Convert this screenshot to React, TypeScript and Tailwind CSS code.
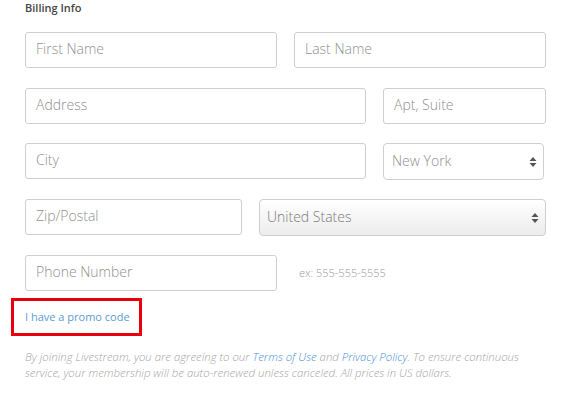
import React from "react";

const Arrows = () => (
  <svg width="8" height="12" viewBox="0 0 8 12" className="absolute right-[6px] top-1/2 -translate-y-1/2">
    <path d="M4 1 L7.5 5 L0.5 5 Z" fill="#555" />
    <path d="M4 11 L7.5 7 L0.5 7 Z" fill="#555" />
  </svg>
);

const Input = ({ label, w }: { label: string; w: string }) => (
  <div className={`${w} h-[36px] border border-[#cfcfcf] rounded-[3px] flex items-center pl-[10px] pb-[3px] text-[14px] font-light text-[#8f8f8f] bg-white`}>
    {label}
  </div>
);

export default function App() {
  return (
    <div
      className="w-[570px] h-[396px] bg-white overflow-hidden pl-[25px] relative"
      style={{ fontFamily: "'Open Sans', Lato, sans-serif" }}
    >
      <div className="text-[11px] font-semibold text-[#444] leading-[16px]">Billing Info</div>
      <div className="flex gap-[17px] mt-[16px]">
        <Input label="First Name" w="w-[252px]" />
        <Input label="Last Name" w="w-[252px]" />
      </div>
      <div className="flex gap-[17px] mt-[20px]">
        <Input label="Address" w="w-[341px]" />
        <Input label="Apt, Suite" w="w-[163px]" />
      </div>
      <div className="flex gap-[17px] mt-[19px]">
        <Input label="City" w="w-[341px]" />
        <div className="relative w-[161px] h-[37px] border border-[#cfcfcf] rounded-[4px] flex items-center pl-[8px] pb-[3px] text-[14px] font-light text-[#8f8f8f] bg-white">
          New York
          <Arrows />
        </div>
      </div>
      <div className="flex gap-[17px] mt-[19px]">
        <Input label="Zip/Postal" w="w-[217px]" />
        <div className="relative w-[287px] h-[37px] border border-[#cfcfcf] rounded-[4px] flex items-center pl-[7px] pb-[3px] text-[14px] font-light text-[#7a7a7a] bg-gradient-to-b from-white to-[#ececec]">
          United States
          <Arrows />
        </div>
      </div>
      <div className="flex items-center gap-[22px] mt-[19px]">
        <Input label="Phone Number" w="w-[252px]" />
        <div className="text-[11px] font-light text-[#999]">ex: 555-555-5555</div>
      </div>
      <div className="-ml-[14px] mt-[7px] w-[131px] h-[38px] border-[3px] border-[#e8000b] flex items-center pl-[11px]">
        <span className="text-[11px] text-[#5b9bd5]">I have a promo code</span>
      </div>
      <p className="mt-[13px] text-[11.4px] italic font-light text-[#a5a5a5] leading-[16px] w-[535px] whitespace-nowrap">
        By joining Livestream, you are agreeing to our <span className="text-[#4a90d9]">Terms of Use</span> and{" "}
        <span className="text-[#4a90d9]">Privacy Policy</span>. To ensure continuous
        <br />
        service, your membership will be auto-renewed unless canceled. All prices in US dollars.
      </p>
    </div>
  );
}
